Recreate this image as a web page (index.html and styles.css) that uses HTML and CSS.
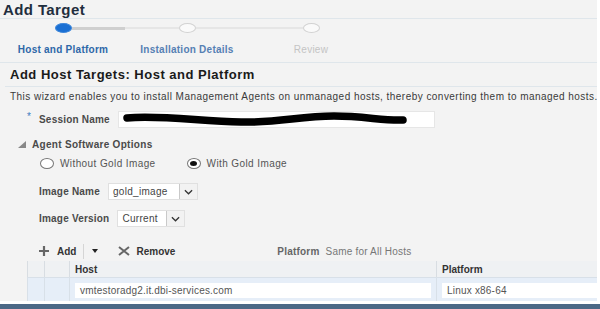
FILE: index.html
```html
<!DOCTYPE html>
<html lang="en">
<head>
  <meta charset="UTF-8">
  <title>Add Target</title>
  <link rel="stylesheet" href="styles.css">
</head>
<body>
  <div class="page">
    <header class="title">
      <h1>Add Target</h1>
    </header>

    <div class="train">
      <div class="step active">
        <div class="track">
          <span class="seg"></span>
          <span class="dot"></span>
          <span class="seg done"></span>
        </div>
        <div class="step-label">Host and Platform</div>
      </div>
      <div class="step next">
        <div class="track">
          <span class="seg light"></span>
          <span class="dot"></span>
          <span class="seg light"></span>
        </div>
        <div class="step-label">Installation Details</div>
      </div>
      <div class="step off">
        <div class="track">
          <span class="seg light"></span>
          <span class="dot"></span>
          <span class="seg"></span>
        </div>
        <div class="step-label">Review</div>
      </div>
    </div>

    <section class="panel">
      <h2 class="subhead">Add Host Targets: Host and Platform</h2>
      <p class="intro">This wizard enables you to install Management Agents on unmanaged hosts, thereby converting them to managed hosts.</p>

      <div class="field session">
        <span class="req">*</span>
        <label>Session Name</label>
        <div class="text-input wide">
          <svg class="scribble" viewBox="0 0 317 15" width="317" height="15">
            <path d="M8 6 C 40 3, 80 9, 122 10 C 160 11, 180 4, 215 4 C 245 4, 265 9, 284 8" fill="none" stroke="#000" stroke-width="7.5" stroke-linecap="round"/>
          </svg>
        </div>
      </div>

      <div class="disclosure">
        <span class="tri"></span>
        <span>Agent Software Options</span>
      </div>

      <div class="radios">
        <label class="radio"><span class="circle"></span>Without Gold Image</label>
        <label class="radio"><span class="circle checked"></span>With Gold Image</label>
      </div>

      <div class="field image-name">
        <label>Image Name</label>
        <div class="select">
          <span class="value">gold_image</span>
          <span class="arrow"><svg viewBox="0 0 10 6" width="9" height="6"><path d="M1 1 L5 5 L9 1" fill="none" stroke="#333" stroke-width="1.4"/></svg></span>
        </div>
      </div>

      <div class="field image-version">
        <label>Image Version</label>
        <div class="select">
          <span class="value">Current</span>
          <span class="arrow"><svg viewBox="0 0 10 6" width="9" height="6"><path d="M1 1 L5 5 L9 1" fill="none" stroke="#333" stroke-width="1.4"/></svg></span>
        </div>
      </div>

      <div class="toolbar">
        <span class="tool">
          <svg viewBox="0 0 10 10" width="10" height="10"><path d="M5 0 V10 M0 5 H10" stroke="#666" stroke-width="2.2"/></svg>
          Add
        </span>
        <span class="sep"></span>
        <span class="caret"></span>
        <span class="tool remove">
          <svg viewBox="0 0 12 10" width="12" height="10"><path d="M1 1 L11 9 M11 1 L1 9" stroke="#666" stroke-width="2"/></svg>
          Remove
        </span>
        <span class="platform-note"><b>Platform</b> Same for All Hosts</span>
      </div>

      <table class="hosts">
        <thead>
          <tr>
            <th class="c1"></th>
            <th class="c2"></th>
            <th class="host">Host</th>
            <th class="plat">Platform</th>
          </tr>
        </thead>
        <tbody>
          <tr>
            <td class="c1"></td>
            <td class="c2"></td>
            <td class="host"><div class="cell-input">vmtestoradg2.it.dbi-services.com</div></td>
            <td class="plat"><div class="cell-input">Linux x86-64</div></td>
          </tr>
        </tbody>
      </table>
    </section>
  </div>
  <div class="bottom-bar"></div>
</body>
</html>
```

FILE: styles.css
```css
body {
  margin: 0;
  background-color: #fff;
  font-family: "Liberation Sans", Arial, sans-serif;
  color: #444;
  width: 600px;
  height: 309px;
  overflow: hidden;
}

.page {
  width: 597px;
  height: 301px;
  background-color: #f3f3f3;
  overflow: hidden;
}

/* title */
.title {
  height: 18px;
  border-bottom: 1px solid #dfe6eb;
}

.title h1 {
  margin: 0;
  padding-left: 3px;
  font-size: 15px;
  line-height: 19px;
  letter-spacing: 0.4px;
  color: #1f2e3e;
}

/* train */
.train {
  display: flex;
  height: 43px;
  padding-left: 1px;
  border-bottom: 1px solid #dfe6eb;
}

.step {
  width: 124px;
  display: flex;
  flex-direction: column;
  align-items: center;
}

.track {
  width: 100%;
  height: 18px;
  display: flex;
  align-items: center;
}

.seg {
  flex: 1;
  height: 1px;
}

.seg.done {
  height: 3px;
  background-color: #cfcfcf;
}

.seg.light {
  height: 2px;
  background-color: #e6e6e6;
}

.dot {
  width: 17px;
  height: 10px;
  border-radius: 50%;
  box-sizing: border-box;
  background-color: #fafafa;
  border: 1px solid #d2d2d2;
}

.step.active .dot {
  background-color: #1a6fd3;
  border-color: #3d86da;
}

.step-label {
  margin-top: 7px;
  font-size: 10px;
  font-weight: bold;
  letter-spacing: 0.25px;
  white-space: nowrap;
}

.step.active .step-label { color: #2d67a8; }
.step.next .step-label { color: #5680b3; }
.step.off .step-label { color: #c4c4c4; font-weight: normal; }

/* panel */
.subhead {
  margin: 0 0 0 5px;
  height: 23px;
  padding-left: 5px;
  border-bottom: 1px solid #dfe6eb;
  font-size: 13px;
  line-height: 23px;
  letter-spacing: 0.5px;
  color: #1a1a1a;
}

.intro {
  margin: 0;
  padding-left: 10px;
  line-height: 20px;
  font-size: 10px;
  letter-spacing: 0.46px;
  color: #3a3a3a;
  white-space: nowrap;
}

.field {
  display: flex;
  align-items: center;
  gap: 8px;
  padding-left: 39px;
}

.field label {
  font-size: 10px;
  font-weight: bold;
  letter-spacing: 0.2px;
  color: #4a4a4a;
}

.session {
  margin-top: 4px;
  padding-left: 27px;
  gap: 0;
}

.session .req {
  width: 12px;
  color: #3a7bc0;
  font-size: 10px;
  align-self: flex-start;
}

.session label {
  margin-right: 8px;
}

.text-input {
  height: 15px;
  background-color: #fff;
  border: 1px solid #e6e6e6;
}

.text-input.wide {
  width: 315px;
}

.scribble {
  display: block;
}

.disclosure {
  margin-top: 8px;
  height: 16px;
  display: flex;
  align-items: center;
  padding-left: 18px;
  font-size: 10px;
  font-weight: bold;
  color: #4a4a4a;
  letter-spacing: 0.3px;
}

.tri {
  width: 0;
  height: 0;
  border-left: 8px solid transparent;
  border-bottom: 7px solid #888;
  margin-right: 6px;
}

.radios {
  margin-top: 4px;
  height: 14px;
  display: flex;
  align-items: center;
  gap: 31px;
  padding-left: 40px;
}

.radio {
  display: flex;
  align-items: center;
  gap: 6px;
  font-size: 10px;
  letter-spacing: 0.4px;
  color: #555;
}

.circle {
  width: 14px;
  height: 11px;
  box-sizing: border-box;
  border-radius: 50%;
  border: 1px solid #777;
  background-color: #fff;
  display: flex;
  align-items: center;
  justify-content: center;
}

.circle.checked::after {
  content: "";
  width: 7px;
  height: 5px;
  border-radius: 50%;
  background-color: #111;
}

.image-name {
  margin-top: 13px;
}

.image-version {
  margin-top: 10px;
}

.select {
  display: flex;
  height: 17px;
  box-sizing: border-box;
  background-color: #fff;
  border: 1px solid #e0e0e0;
}

.select .value {
  padding: 0 6px 0 4px;
  font-size: 10px;
  line-height: 15px;
  color: #444;
  letter-spacing: 0.3px;
}

.image-name .select .value { width: 60px; }
.image-version .select .value { width: 38px; }

.select .arrow {
  width: 17px;
  display: flex;
  align-items: center;
  justify-content: center;
  background-color: #f2f2f2;
  border-left: 1px solid #c9c9c9;
}

/* toolbar */
.toolbar {
  margin-top: 16px;
  height: 16px;
  display: flex;
  align-items: center;
  padding-left: 39px;
  font-size: 10px;
}

.tool {
  display: flex;
  align-items: center;
  gap: 8px;
  font-weight: bold;
  color: #333;
}

.sep {
  width: 1px;
  height: 15px;
  margin: 0 8px 0 7px;
  background-color: #d5d5d5;
}

.caret {
  width: 0;
  height: 0;
  border-left: 3px solid transparent;
  border-right: 3px solid transparent;
  border-top: 4px solid #222;
}

.tool.remove {
  margin-left: 20px;
  gap: 6px;
}

.platform-note {
  margin-left: 102px;
  color: #777;
  letter-spacing: 0.2px;
}

.platform-note b {
  color: #666;
  margin-right: 3px;
}

/* table */
.hosts {
  margin: 2px 0 0 27px;
  width: 570px;
  border-collapse: collapse;
  font-size: 10px;
}

.hosts th {
  height: 16px;
  padding: 0 0 0 5px;
  text-align: left;
  font-weight: bold;
  color: #333;
  background-color: #eff1f3;
  border-left: 1px solid #d8dde2;
  border-bottom: 1px solid #d8e0e8;
}

.hosts td {
  height: 24px;
  padding: 0 0 0 5px;
  background-color: #e6eef8;
  border-left: 1px solid #d8e0e8;
}

.hosts .c1 { width: 11px; }
.hosts .c2 { width: 19px; }
.hosts .host { width: 361px; }

.cell-input {
  height: 15px;
  margin-right: 5px;
  padding-left: 5px;
  line-height: 15px;
  background-color: #fff;
  color: #555;
  letter-spacing: 0.2px;
}

.plat .cell-input {
  margin-right: 0;
}

.bottom-bar {
  margin-top: 3px;
  height: 5px;
  background-color: #4b6886;
}
```
